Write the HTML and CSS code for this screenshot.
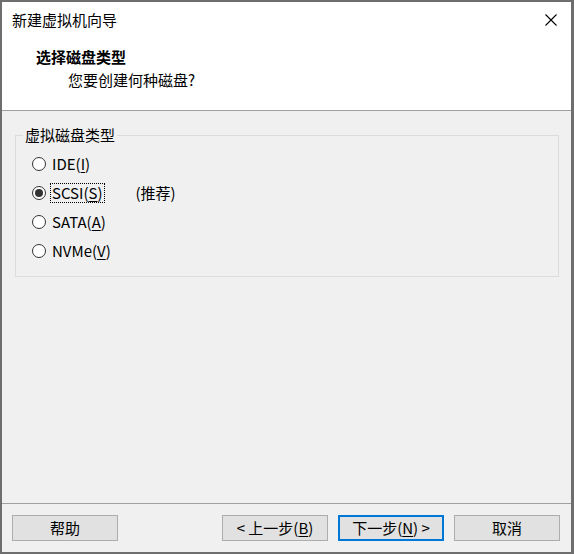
FILE: index.html
```html
<!DOCTYPE html>
<html lang="zh-CN">
<head>
    <meta charset="UTF-8">
    <title>新建虚拟机向导</title>
    <link rel="stylesheet" href="styles.css">
</head>
<body>
    <div class="window">
        <div class="titlebar">
            <span class="title">新建虚拟机向导</span>
            <span class="close">
                <svg width="12" height="12" viewBox="0 0 12 12">
                    <path d="M0.5 0.5 L11.5 11.5 M11.5 0.5 L0.5 11.5" stroke="#000" stroke-width="1.1" fill="none"/>
                </svg>
            </span>
        </div>

        <div class="header">
            <div class="header-title">选择磁盘类型</div>
            <div class="header-sub">您要创建何种磁盘?</div>
        </div>

        <div class="content">
            <fieldset class="group">
                <legend>虚拟磁盘类型</legend>
                <div class="radio-row">
                    <span class="radio"></span>
                    <span class="label">IDE(<u>I</u>)</span>
                </div>
                <div class="radio-row">
                    <span class="radio checked"></span>
                    <span class="label focus">SCSI(<u>S</u>)</span>
                    <span class="note">(推荐)</span>
                </div>
                <div class="radio-row">
                    <span class="radio"></span>
                    <span class="label">SATA(<u>A</u>)</span>
                </div>
                <div class="radio-row">
                    <span class="radio"></span>
                    <span class="label">NVMe(<u>V</u>)</span>
                </div>
            </fieldset>
        </div>

        <div class="footer">
            <button class="btn">帮助</button>
            <div class="spacer"></div>
            <button class="btn">&lt; 上一步(<u>B</u>)</button>
            <button class="btn default">下一步(<u>N</u>) &gt;</button>
            <button class="btn">取消</button>
        </div>
    </div>
</body>
</html>
```

FILE: styles.css
```css
* {
    margin: 0;
    padding: 0;
    box-sizing: border-box;
}

body {
    font-family: "Noto Sans CJK SC", "Noto Sans", sans-serif;
    font-size: 15px;
    color: #000;
    background-color: #f0f0f0;
}

.window {
    width: 574px;
    height: 554px;
    border: 2px solid #6e6e6e;
    border-right-width: 3px;
    display: flex;
    flex-direction: column;
    background-color: #f0f0f0;
}

.titlebar {
    height: 36px;
    display: flex;
    align-items: center;
    justify-content: space-between;
    background-color: #fff;
    padding-left: 10px;
}

.title {
    line-height: 36px;
}

.close {
    width: 41px;
    display: flex;
    justify-content: center;
    align-items: center;
}

.close svg {
    display: block;
}

.header {
    height: 73px;
    background-color: #fff;
    border-bottom: 1px solid #a0a0a0;
    padding: 9px 0 0 34px;
}

.header-title {
    font-weight: bold;
    line-height: 20px;
}

.header-sub {
    line-height: 20px;
    margin-top: 3px;
    padding-left: 32px;
}

.content {
    flex: 1;
    padding: 14px 12px 0 13px;
}

.group {
    border: 1px solid #dcdcdc;
    padding: 4px 0 11px 0;
}

.group legend {
    margin-left: 7px;
    padding: 0 2px;
    line-height: 20px;
}

.radio-row {
    height: 29px;
    display: flex;
    align-items: center;
    padding-left: 16px;
}

.radio {
    flex: none;
    width: 14px;
    height: 14px;
    border: 1px solid #333;
    border-radius: 50%;
    background-color: #fff;
    display: flex;
    align-items: center;
    justify-content: center;
    margin-right: 4px;
}

.radio.checked::after {
    content: "";
    width: 8px;
    height: 8px;
    border-radius: 50%;
    background-color: #333;
}

.label {
    line-height: 18px;
    padding: 0 1px;
    border: 1px solid transparent;
}

.label.focus {
    border: 1px dotted #000;
}

.note {
    margin-left: 31px;
}

u {
    text-decoration: underline;
    text-underline-offset: 2px;
}

.footer {
    border-top: 1px solid #a0a0a0;
    padding: 11px 11px 11px 10px;
    display: flex;
    gap: 10px;
}

.spacer {
    flex: 1;
}

.btn {
    width: 106px;
    height: 26px;
    font-family: inherit;
    font-size: 15px;
    color: #000;
    background-color: #e1e1e1;
    border: 1px solid #adadad;
    line-height: 22px;
}

.btn.default {
    border: 2px solid #0078d7;
}
```
